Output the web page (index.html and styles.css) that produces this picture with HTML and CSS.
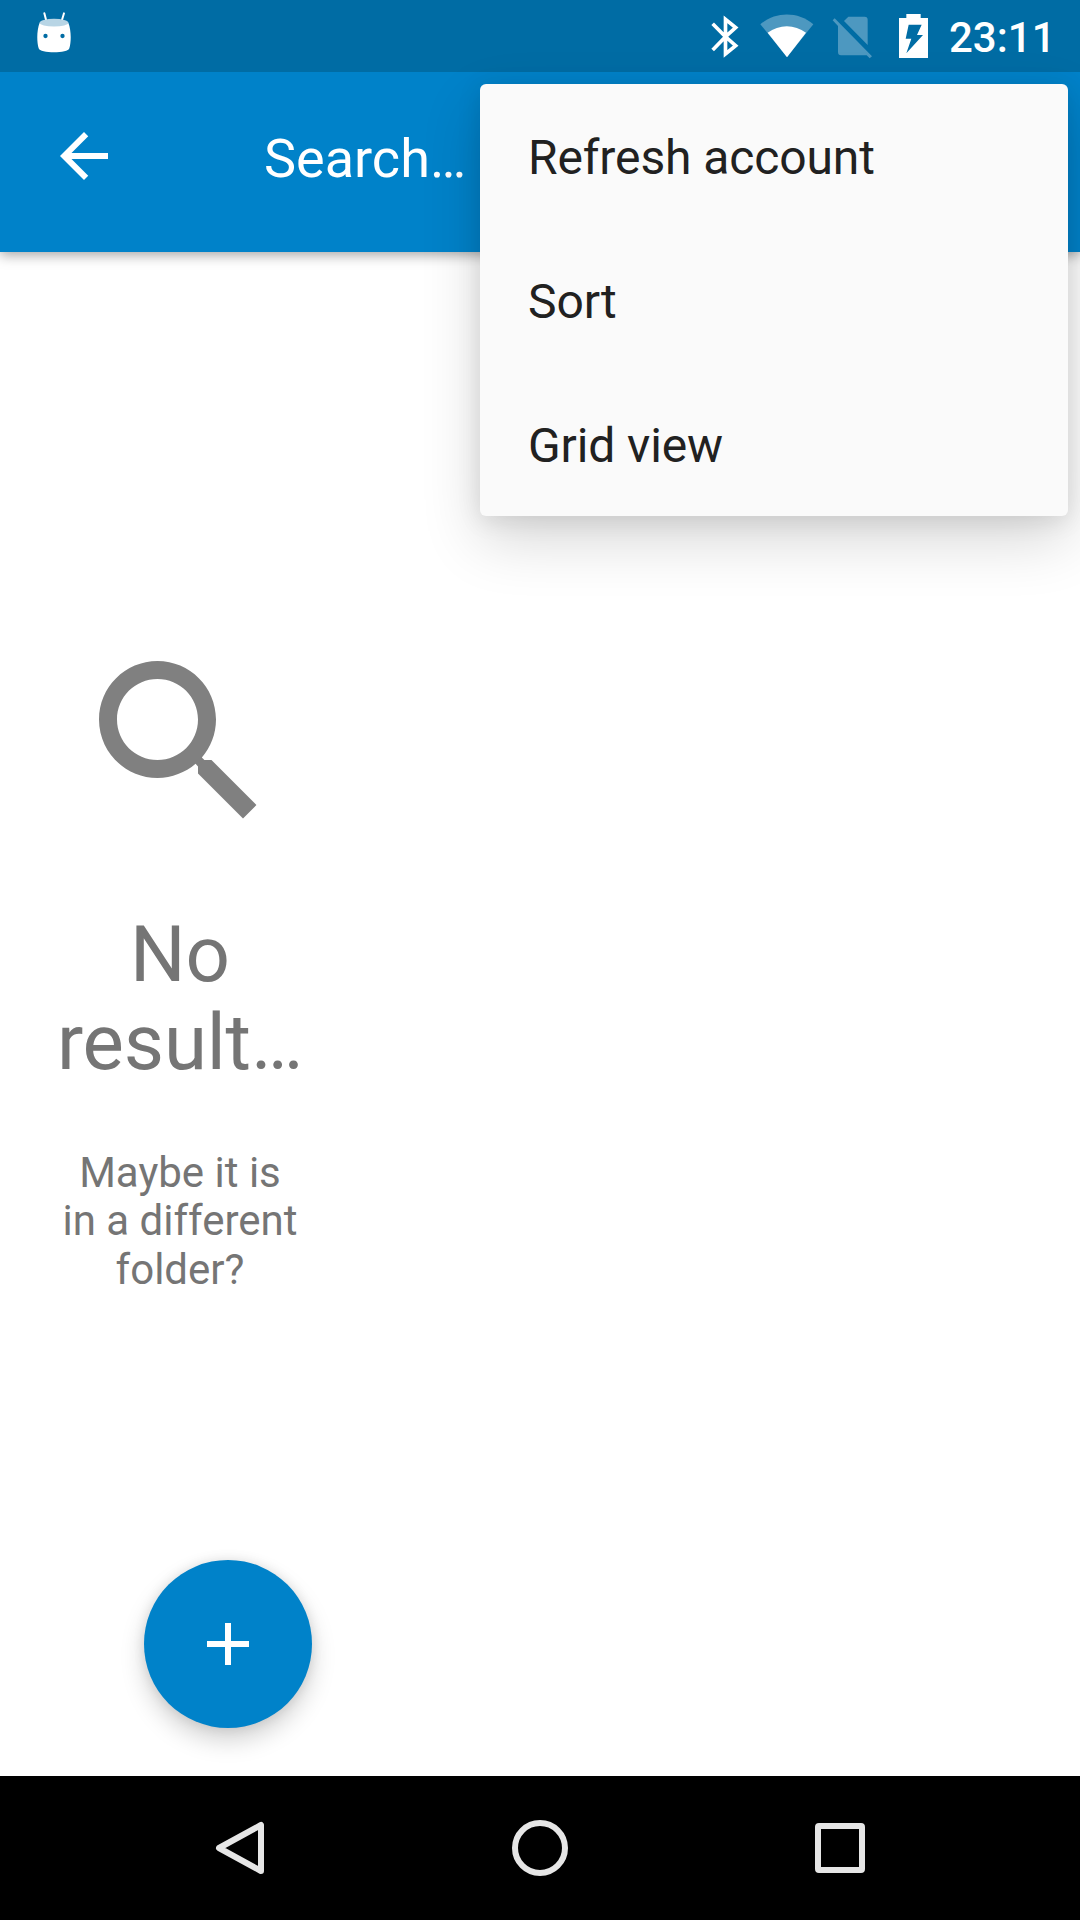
FILE: index.html
```html
<!DOCTYPE html>
<html lang="en">
<head>
<meta charset="utf-8">
<title>Search</title>
<link rel="stylesheet" href="styles.css">
</head>
<body>
<div class="screen">
  <header class="status-bar">
    <svg class="icon-android" viewBox="111 36 102 123" width="34" height="41">
      <path d="M133 40L139 63M192 40L185 63" stroke="#fff" stroke-width="6" stroke-linecap="round"/>
      <path d="M119 68C110 90 110 126 116 145C119 161 205 161 208 145C214 126 214 90 205 68C205 62 119 62 119 68Z" fill="#fff"/>
      <ellipse cx="162" cy="68" rx="43" ry="11.500" fill="#b8d5e5"/>
      <circle cx="136.500" cy="108" r="6.500" fill="#006ca4"/>
      <circle cx="187.500" cy="108" r="6.500" fill="#006ca4"/>
    </svg>
    <svg class="icon-bluetooth" viewBox="64 44 84 132" width="28" height="44">
      <path d="M69 70L107.500 109L138 82L107.500 57V161L138 136L107.500 109L69 149" fill="none" stroke="#fff" stroke-width="11"/>
    </svg>
    <svg class="icon-wifi" viewBox="212 41 162 132" width="54" height="44">
      <path d="M213 72C259 33 326 33 372 72L293 170Z" fill="#4d98c0"/>
      <path d="M235 97C269 71 316 71 350 97L293 171Z" fill="#fff"/>
    </svg>
    <svg class="icon-sim" viewBox="426 47 120 129" width="40" height="43">
      <path d="M475 49H524Q533 49 533 58V134L462 62ZM428 60L434 54L546 168L539 174L530 165H453Q444 165 444 155V77Z" fill="#4d98c0"/>
    </svg>
    <svg class="icon-battery" viewBox="627 42 87 132" width="29" height="44">
      <path fill-rule="evenodd" d="M627 54H649V42H692V54H714V174H627ZM656 74L647 116H664L649 160L699 105H681L695 74Z" fill="#fff"/>
    </svg>
    <span class="clock">23:11</span>
  </header>

  <div class="toolbar">
    <svg viewBox="0 0 24 24" width="72" height="72" fill="#fff"><path d="M20 11H7.830l5.590-5.590L12 4l-8 8 8 8 1.410-1.410L7.830 13H20v-2z"/></svg>
    <span class="query">Search…</span>
  </div>

  <main class="content">
    <section class="empty">
      <svg viewBox="0 0 24 24" width="216" height="216" fill="#808080"><path d="M15.500 14h-.790l-.280-.270C15.410 12.590 16 11.110 16 9.500 16 5.910 13.090 3 9.500 3S3 5.910 3 9.500 5.910 16 9.500 16c1.610 0 3.090-.590 4.230-1.570l.270.280v.790l5 4.990L20.490 19l-4.990-5zm-6 0C7.010 14 5 11.990 5 9.500S7.010 5 9.500 5 14 7.010 14 9.500 11.990 14 9.500 14z"/></svg>
      <h1 class="empty-title">No<br>result…</h1>
      <p class="empty-hint">Maybe it is<br>in a different<br>folder?</p>
    </section>
    <button class="fab" aria-label="Add">
      <svg viewBox="0 0 24 24" width="72" height="72" fill="#fff"><path d="M19 13h-6v6h-2v-6H5v-2h6V5h2v6h6z"/></svg>
    </button>
  </main>

  <nav class="nav-bar">
    <svg viewBox="0 0 60 60" width="60" height="60"><path d="M51 7V53L9 30Z"/></svg>
    <svg viewBox="0 0 60 60" width="60" height="60"><circle cx="30" cy="30" r="25"/></svg>
    <svg viewBox="0 0 60 60" width="60" height="60"><rect x="8" y="8" width="44" height="44" rx="1"/></svg>
  </nav>

  <ul class="menu">
    <li>Refresh account</li>
    <li>Sort</li>
    <li>Grid view</li>
  </ul>
</div>
</body>
</html>
```
FILE: styles.css
```css
* { box-sizing: border-box; }

body {
  margin: 0;
  font-family: Roboto, "Noto Sans", sans-serif;
}

svg { display: block; flex: none; }

.screen {
  position: relative;
  width: 1080px;
  height: 1920px;
  display: flex;
  flex-direction: column;
  overflow: hidden;
  background: #fff;
}

.status-bar {
  position: relative;
  z-index: 2;
  height: 72px;
  flex: none;
  display: flex;
  align-items: flex-start;
  padding: 0 29px 0 37px;
  background: #006ca4;
}

.icon-android { margin-top: 12px; }
.icon-bluetooth { margin: 15px 21px 0 auto; }
.icon-wifi { margin: 14px 18px 0 0; }
.icon-sim { margin: 16px 27px 0 0; }
.icon-battery { margin: 14px 21px 0 0; }

.clock {
  width: 102px;
  color: #fff;
  font-size: 42px;
  font-weight: 500;
  line-height: 76px;
  white-space: nowrap;
}

.toolbar {
  position: relative;
  z-index: 1;
  height: 180px;
  flex: none;
  display: flex;
  align-items: center;
  gap: 144px;
  padding: 0 48px 12px;
  background: #0082c9;
  box-shadow: 0 3px 12px rgba(0, 0, 0, .36);
}

.query {
  padding-top: 5px;
  color: #fff;
  font-size: 54px;
  line-height: 64px;
}

.content {
  flex: 1;
  width: 360px;
  display: flex;
  flex-direction: column;
  justify-content: space-between;
  padding: 382px 48px 48px;
}

.empty {
  display: flex;
  flex-direction: column;
  align-items: center;
  color: #757575;
  text-align: center;
}

.empty-title {
  margin: 61px 0 0;
  font-size: 78px;
  font-weight: 400;
  line-height: 88px;
  letter-spacing: -.15px;
}

.empty-hint {
  margin: 62px 0 0;
  font-size: 42px;
  line-height: 48.400px;
}

.fab {
  width: 168px;
  height: 168px;
  align-self: flex-end;
  display: flex;
  align-items: center;
  justify-content: center;
  padding: 0;
  border: 0;
  border-radius: 50%;
  background: #0082c9;
  box-shadow: 0 12px 24px rgba(0, 0, 0, .18), 0 0 12px rgba(0, 0, 0, .1);
}

.nav-bar {
  height: 144px;
  flex: none;
  display: flex;
  align-items: center;
  justify-content: center;
  gap: 240px;
  background: #000;
  fill: none;
  stroke: #e6e6e6;
  stroke-width: 6;
  stroke-linejoin: round;
}

.menu {
  position: absolute;
  z-index: 3;
  top: 84px;
  right: 12px;
  width: 588px;
  margin: 0;
  padding: 0;
  list-style: none;
  border-radius: 6px;
  background: #fafafa;
  color: #212121;
  font-size: 48px;
  letter-spacing: -.12px;
  box-shadow: 0 24px 60px rgba(0, 0, 0, .16), 0 4px 24px rgba(0, 0, 0, .1);
}

.menu li {
  height: 144px;
  display: flex;
  align-items: center;
  padding: 2px 48px 0;
}
```
